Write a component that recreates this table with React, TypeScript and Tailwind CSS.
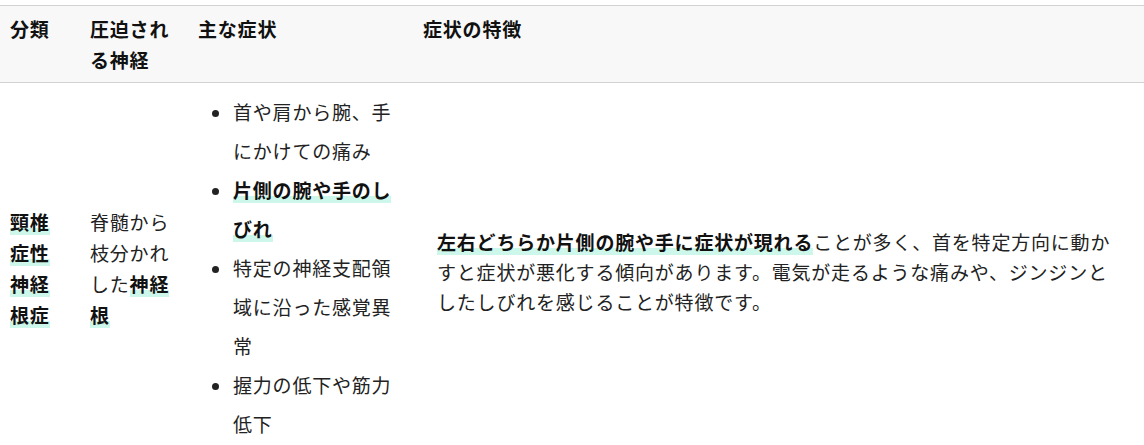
const marker =
  "bg-[linear-gradient(transparent_74%,#cdf7ea_74%)] font-bold text-[#111]";

const symptoms = [
  { text: "首や肩から腕、手にかけての痛み", strong: false },
  { text: "片側の腕や手のしびれ", strong: true },
  { text: "特定の神経支配領域に沿った感覚異常", strong: false },
  { text: "握力の低下や筋力低下", strong: false },
];

export default function App() {
  return (
    <div className="min-h-screen bg-white pt-[5px] font-['Noto_Sans_CJK_JP',sans-serif] text-[19px] tracking-[0.8px] text-[#222]">
      <table className="w-full table-fixed border-collapse">
        <colgroup>
          <col className="w-[80px]" />
          <col className="w-[108px]" />
          <col className="w-[225px]" />
          <col />
        </colgroup>
        <thead>
          <tr className="border-y border-[#d2d2d2] bg-[#f8f8f8] text-left align-top leading-[31px]">
            <th className="pl-[10px] pr-[20px] pt-[7px] pb-[7px] font-bold text-[#111]">分類</th>
            <th className="px-[10px] pt-[7px] pb-[7px] font-bold text-[#111]">圧迫される神経</th>
            <th className="px-[10px] pt-[7px] pb-[7px] font-bold text-[#111]">主な症状</th>
            <th className="px-[10px] pt-[7px] pb-[7px] font-bold text-[#111]">症状の特徴</th>
          </tr>
        </thead>
        <tbody>
          <tr className="align-middle">
            <td className="pl-[10px] pr-[20px] py-[9px] leading-[31px]">
              <span className={marker}>頸椎症性神経根症</span>
            </td>
            <td className="px-[10px] py-[9px] leading-[31px]">
              脊髄から枝分かれした<span className={marker}>神経根</span>
            </td>
            <td className="px-[10px] py-[9px]">
              <ul className="list-disc pl-[35px] leading-[39px]">
                {symptoms.map((item) => (
                  <li key={item.text}>
                    {item.strong ? <span className={marker}>{item.text}</span> : item.text}
                  </li>
                ))}
              </ul>
            </td>
            <td className="pl-[24px] pr-[22px] py-[9px] leading-[30px]">
              <p className="mt-2">
                <span className={marker}>左右どちらか片側の腕や手に症状が現れる</span>
                ことが多く、首を特定方向に動かすと症状が悪化する傾向があります。電気が走るような痛みや、ジンジンとしたしびれを感じることが特徴です。
              </p>
            </td>
          </tr>
        </tbody>
      </table>
    </div>
  );
}
